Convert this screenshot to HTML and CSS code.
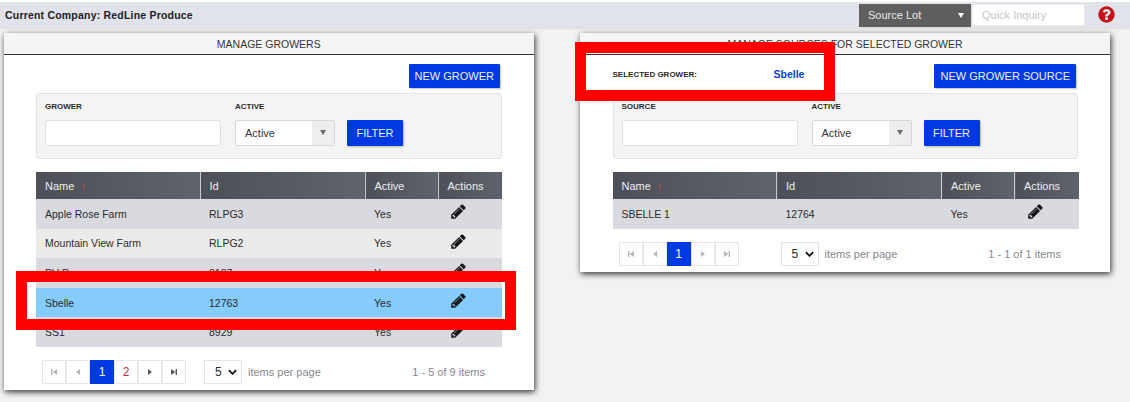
FILE: index.html
```html
<!DOCTYPE html>
<html lang="en">
<head>
<meta charset="utf-8">
<title>Manage Growers</title>
<link rel="stylesheet" href="styles.css">
</head>
<body>
<svg class="defs" width="0" height="0" aria-hidden="true">
  <symbol id="pencil" viewBox="0 0 1792 1792"><path d="M491 1536l91-91-235-235-91 91v107h128v128h107zm523-928q0-22-22-22-10 0-17 7l-542 542q-7 7-7 17 0 22 22 22 10 0 17-7l542-542q7-7 7-17zm-54-192l416 416-832 832h-416v-416zm683 96q0 53-37 90l-166 166-416-416 166-165q36-38 90-38 53 0 91 38l235 234q37 39 37 91z"/></symbol>
  <symbol id="first" viewBox="0 0 10 10"><path d="M2 2h1.4v6H2zM8 2v6L3.6 5z"/></symbol>
  <symbol id="prev" viewBox="0 0 10 10"><path d="M7 2v6L3 5z"/></symbol>
  <symbol id="next" viewBox="0 0 10 10"><path d="M3 2v6l4-3z"/></symbol>
  <symbol id="last" viewBox="0 0 10 10"><path d="M2 2v6l4.4-3zM6.6 2H8v6H6.6z"/></symbol>
</svg>

<header class="topbar">
  <div class="company">Current Company: RedLine Produce</div>
  <div class="lookup">
    <div class="lot"><span>Source Lot</span><i class="lot-caret"></i></div>
    <input class="quick" type="text" placeholder="Quick Inquiry">
    <svg class="help" viewBox="0 0 1792 1792"><path d="M1024 1376v-192q0-14-9-23t-23-9h-192q-14 0-23 9t-9 23v192q0 14 9 23t23 9h192q14 0 23-9t9-23zm256-672q0-88-55.5-163t-138.5-116-170-41q-243 0-371 213-15 24 8 42l132 100q7 6 19 6 16 0 25-12 53-68 86-92 34-24 86-24 48 0 85.5 26t37.5 59q0 38-20 61t-68 45q-63 28-115.5 86.5t-52.5 125.5v36q0 14 9 23t23 9h192q14 0 23-9t9-23q0-19 21.5-49.5t54.5-49.5q32-18 49-28.5t46-35 44.5-48 28-60.5 12.5-81zm384 192q0 209-103 385.5t-279.5 279.5-385.5 103-385.5-103-279.5-279.5-103-385.5 103-385.5 279.5-279.5 385.5-103 385.5 103 279.5 279.5 103 385.5z"/></svg>
  </div>
</header>

<main class="panels">
  <section class="panel panel-left">
    <h2 class="panel-title">MANAGE GROWERS</h2>
    <div class="panel-body">
      <div class="actions-row"><button class="btn">NEW GROWER</button></div>
      <div class="filter">
        <div class="field field-name"><label>GROWER</label><input type="text"></div>
        <div class="field field-active"><label>ACTIVE</label><div class="combo"><span>Active</span><b><i></i></b></div></div>
        <button class="btn btn-filter">FILTER</button>
      </div>
      <table class="grid">
        <thead><tr><th class="c1">Name <span class="sort">↑</span></th><th class="c2">Id</th><th class="c3">Active</th><th class="c4">Actions</th></tr></thead>
        <tbody>
          <tr><td>Apple Rose Farm</td><td>RLPG3</td><td>Yes</td><td><svg class="edit"><use href="#pencil"/></svg></td></tr>
          <tr class="alt"><td>Mountain View Farm</td><td>RLPG2</td><td>Yes</td><td><svg class="edit"><use href="#pencil"/></svg></td></tr>
          <tr><td>PV Pr</td><td>8187</td><td>Yes</td><td><svg class="edit"><use href="#pencil"/></svg></td></tr>
          <tr class="selected"><td>Sbelle</td><td>12763</td><td>Yes</td><td><svg class="edit"><use href="#pencil"/></svg></td></tr>
          <tr><td>SS1</td><td>8929</td><td>Yes</td><td><svg class="edit"><use href="#pencil"/></svg></td></tr>
        </tbody>
      </table>
      <div class="pager">
        <div class="pages">
          <span class="pg off"><svg><use href="#first"/></svg></span>
          <span class="pg off"><svg><use href="#prev"/></svg></span>
          <span class="pg on">1</span>
          <span class="pg num">2</span>
          <span class="pg"><svg><use href="#next"/></svg></span>
          <span class="pg"><svg><use href="#last"/></svg></span>
        </div>
        <div class="size"><span>5</span><svg viewBox="0 0 10 6"><path d="M1 1l4 4 4-4" /></svg></div>
        <span class="per">items per page</span>
        <span class="count">1 - 5 of 9 items</span>
      </div>
    </div>
    <div class="mark mark-row"></div>
  </section>

  <section class="panel panel-right">
    <h2 class="panel-title">MANAGE SOURCES FOR SELECTED GROWER</h2>
    <div class="panel-body">
      <div class="actions-row split">
        <div class="selected-grower"><span class="sg-label">SELECTED GROWER:</span><span class="sg-name">Sbelle</span></div>
        <button class="btn">NEW GROWER SOURCE</button>
      </div>
      <div class="filter">
        <div class="field field-name"><label>SOURCE</label><input type="text"></div>
        <div class="field field-active"><label>ACTIVE</label><div class="combo"><span>Active</span><b><i></i></b></div></div>
        <button class="btn btn-filter">FILTER</button>
      </div>
      <table class="grid">
        <thead><tr><th class="c1">Name <span class="sort">↑</span></th><th class="c2">Id</th><th class="c3">Active</th><th class="c4">Actions</th></tr></thead>
        <tbody>
          <tr><td>SBELLE 1</td><td>12764</td><td>Yes</td><td><svg class="edit"><use href="#pencil"/></svg></td></tr>
        </tbody>
      </table>
      <div class="pager">
        <div class="pages">
          <span class="pg off"><svg><use href="#first"/></svg></span>
          <span class="pg off"><svg><use href="#prev"/></svg></span>
          <span class="pg on">1</span>
          <span class="pg off"><svg><use href="#next"/></svg></span>
          <span class="pg off"><svg><use href="#last"/></svg></span>
        </div>
        <div class="size"><span>5</span><svg viewBox="0 0 10 6"><path d="M1 1l4 4 4-4" /></svg></div>
        <span class="per">items per page</span>
        <span class="count">1 - 1 of 1 items</span>
      </div>
    </div>
    <div class="mark mark-head"></div>
  </section>
</main>
</body>
</html>
```
FILE: styles.css
```css
* { box-sizing: border-box; }
html, body { margin: 0; padding: 0; }
body {
  width: 1130px;
  height: 402px;
  overflow: hidden;
  background: #f3f2f3;
  font-family: "Liberation Sans", Arial, sans-serif;
  color: #2b2b2b;
  border-top: 2px solid #fff;
}
.defs { position: absolute; }

.topbar {
  height: 25px;
  background: #e0e3ea;
  display: flex;
  align-items: center;
  justify-content: space-between;
  padding: 0 14px 0 5px;
  box-shadow: 0 2px 2px rgba(0,0,0,.08);
}
.company { font-size: 10.5px; font-weight: 700; color: #1f2126; letter-spacing: .2px; }
.lookup { display: flex; align-items: center; }
.lot {
  width: 112px;
  height: 23px;
  margin-top: 1px;
  background: #5f5f5f;
  color: #e8e8e8;
  font-size: 11px;
  display: flex;
  align-items: center;
  justify-content: space-between;
  padding: 0 6px 0 9px;
}
.lot-caret { width: 0; height: 0; border: 3.5px solid transparent; border-top: 5px solid #fff; border-bottom: 0; margin-right: 1px; }
.quick {
  width: 113px;
  height: 22px;
  margin-left: 1px;
  border: 1px solid #e9eaee;
  border-radius: 2px;
  background: #fff;
  font: 11px "Liberation Sans", Arial, sans-serif;
  padding: 0 9px;
}
.quick::placeholder { color: #c3c5ca; }
.help { width: 19px; height: 19px; margin-left: 12px; fill: #c8101a; }

.panels { display: flex; align-items: flex-start; padding: 6px 0 0 3.5px; gap: 46px; }
.panel {
  position: relative;
  background: #fff;
  box-shadow: 1px 2px 6px rgba(0,0,0,.8);
}
.panel-left { width: 530.5px; height: 357px; }
.panel-right { width: 530px; height: 239px; }
.panel-title {
  margin: 0;
  height: 22px;
  background: #f6f5f5;
  border-bottom: 1px solid #33353a;
  font-size: 10.5px;
  font-weight: 400;
  line-height: 23px;
  text-align: center;
  color: #33353a;
}
.panel-body { padding: 9px 32px 0 32.5px; }

.actions-row { display: flex; justify-content: flex-end; height: 24px; padding-right: 2px; }
.actions-row.split { justify-content: space-between; }
.btn {
  height: 24px;
  padding: 0 6px;
  border: 0;
  border-radius: 1px;
  background: #0039e2;
  color: #eef1ff;
  font: 11px "Liberation Sans", Arial, sans-serif;
  box-shadow: 1px 1px 2px rgba(0,0,0,.25);
}
.selected-grower { display: flex; align-items: center; height: 20px; }
.sg-label { width: 161px; font-size: 8px; font-weight: 700; color: #2b2b2b; }
.sg-name { font-size: 10.5px; font-weight: 700; color: #0a3fd6; }

.filter {
  display: flex;
  align-items: flex-end;
  height: 66px;
  margin-top: 5px;
  padding: 0 8px 12.5px;
  background: #f4f4f4;
  border: 1px solid #e3e4e7;
  border-radius: 3px;
}
.field { display: flex; flex-direction: column; }
.field label { font-size: 8px; font-weight: 700; line-height: 10px; margin-bottom: 8px; color: #2b2b2b; }
.field-name { width: 190px; }
.field-name input { width: 176px; height: 26px; background: #fff; border: 1px solid #dfe1e5; border-radius: 3px; }
.field-active { width: 112px; }
.combo {
  width: 100px;
  height: 26px;
  display: flex;
  background: #fff;
  border: 1px solid #d5d7da;
  border-radius: 2px;
  font-size: 11px;
  color: #33353a;
}
.combo span { flex: 1; line-height: 24px; padding-left: 9px; }
.combo b { width: 22px; background: #eeeeee; display: flex; align-items: center; justify-content: center; }
.combo i { width: 0; height: 0; border: 3px solid transparent; border-top: 5px solid #6a6a6a; border-bottom: 0; }
.btn-filter { width: 56px; height: 26px; padding: 0; }

.grid { width: 466px; margin-top: 13px; border-collapse: collapse; table-layout: fixed; font-size: 10.5px; }
.grid th {
  height: 27px;
  padding: 0 0 0 9px;
  background: linear-gradient(90deg, #4d5057, #5f636c);
  border-left: 1px solid #c9ccd2;
  color: #eceef2;
  font-weight: 400;
  font-size: 11px;
  text-align: left;
}
.grid th:first-child { border-left: 0; }
.c1 { width: 164px; }
.c2 { width: 165px; }
.c3 { width: 73px; }
.c4 { width: 64px; }
.sort { color: #d9433d; font-weight: 700; margin-left: 3px; font-size: 11px; }
.grid td { height: 29.6px; padding: 0 0 0 9px; background: #d9dadf; color: #2b2b2b; }
.grid .alt td { background: #ebebeb; }
.grid .selected td { background: #85ccfa; }
.grid td:last-child { padding-left: 12px; }
.edit { display: block; width: 17px; height: 17px; fill: #17181b; margin-top: -4px; }

.pager {
  display: flex;
  align-items: center;
  height: 24px;
  margin-top: 13.5px;
  padding-left: 6px;
  font-size: 11px;
  color: #85878c;
}
.pages { display: flex; width: 145px; height: 24px; }
.pg {
  width: 24px;
  height: 24px;
  margin-right: 0;
  border: 1px solid #e6e7ea;
  background: #fff;
  display: flex;
  align-items: center;
  justify-content: center;
  font-size: 12px;
}
.pg svg { width: 10px; height: 10px; fill: #55575c; }
.pg.off svg { fill: #b5b6ba; }
.pg.on { background: #0039e2; border-color: #0039e2; color: #fff; }
.pg.num { color: #d8303a; }
.size {
  width: 38px;
  height: 24px;
  margin-left: 17px;
  border: 1px solid #e1e3e7;
  display: flex;
  align-items: center;
  justify-content: space-between;
  padding: 0 4px 0 10px;
  color: #2b2b2b;
  font-size: 12px;
}
.size svg { width: 9px; height: 6px; fill: none; stroke: #111; stroke-width: 2; }
.per { margin-left: 6px; }
.count { margin-left: auto; padding-right: 17px; }

.mark { position: absolute; border: 11px solid #ff0000; pointer-events: none; }
.mark-row { left: 12.5px; top: 238px; width: 500px; height: 59px; }
.mark-head { left: -5px; top: 9px; width: 260px; height: 59px; }
</style>
```
